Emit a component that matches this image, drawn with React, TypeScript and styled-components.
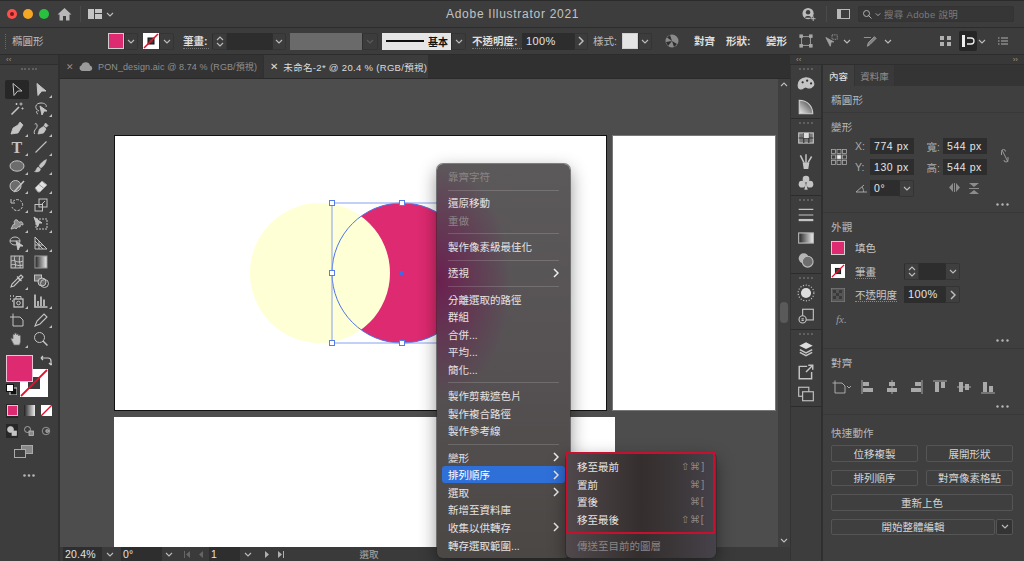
import React from "react";
import styled, { createGlobalStyle } from "styled-components";

const CJK = `"Liberation Sans", "Noto Sans CJK TC", sans-serif`;
const PINK = "#dd2a70";

const GlobalStyle = createGlobalStyle`
  html, body {
    margin: 0;
    padding: 0;
    background: #3a3a3a;
    overflow: hidden;
  }
  * { box-sizing: border-box; }
`;

const Window = styled.div`
  position: relative;
  width: 1024px;
  height: 561px;
  display: flex;
  flex-direction: column;
  overflow: hidden;
  font-family: ${CJK};
  color: #d6d6d6;
  font-size: 10.5px;
  background: #3a3a3a;
`;

/* ---------- title bar ---------- */
const TitleBar = styled.div`
  position: relative;
  height: 28px;
  flex: none;
  display: flex;
  align-items: center;
  background: #3d3d3d;
  border-top: 1px solid #2b2b2b;
  border-bottom: 1px solid #2c2c2c;
`;

const Light = styled.div<{ $color: string; $ml: number }>`
  width: 10px;
  height: 10px;
  border-radius: 50%;
  margin-left: ${(p) => p.$ml}px;
  background: ${(p) => p.$color};
  display: flex;
  align-items: center;
  justify-content: center;
`;

const LightDot = styled.div`
  width: 4px;
  height: 4px;
  border-radius: 50%;
  background: #7a1a1a;
`;

const Title = styled.div`
  position: absolute;
  left: 446px;
  top: 6px;
  font-size: 12px;
  letter-spacing: 0.72px;
  color: #c2c2c2;
  white-space: nowrap;
`;

const VRule = styled.div<{ $ml: number }>`
  width: 1px;
  height: 16px;
  margin-left: ${(p) => p.$ml}px;
  background: #4a4a4a;
`;

const Slot = styled.div<{ $ml?: number; $w: number; $h?: number }>`
  flex: none;
  margin-left: ${(p) => p.$ml ?? 0}px;
  width: ${(p) => p.$w}px;
  height: ${(p) => p.$h ?? 17}px;
  display: flex;
  align-items: center;
  justify-content: center;
  white-space: nowrap;
  color: #cfcfcf;
`;

const SearchBox = styled.div`
  flex: none;
  margin-left: 8px;
  width: 156px;
  height: 16px;
  display: flex;
  align-items: center;
  gap: 3px;
  padding-left: 4px;
  background: #363636;
  border: 1px solid #333;
  border-radius: 2px;
  color: #7b7b7b;
  font-size: 9.5px;
  letter-spacing: 0.3px;
`;

/* ---------- control bar ---------- */
const ControlBar = styled.div`
  height: 27px;
  flex: none;
  display: flex;
  align-items: center;
  background: #3c3c3c;
  border-bottom: 1px solid #2c2c2c;
`;

const Grip = styled.div`
  margin-left: 5px;
  width: 2px;
  height: 15px;
  flex: none;
  border-left: 1px dotted #6a6a6a;
`;

const CtlLabel = styled.div<{ $ml?: number; $w: number; $bright?: boolean; $dotted?: boolean }>`
  flex: none;
  margin-left: ${(p) => p.$ml ?? 0}px;
  width: ${(p) => p.$w}px;
  font-size: 10.5px;
  line-height: 14px;
  white-space: nowrap;
  color: ${(p) => (p.$bright ? "#dedede" : "#bdbdbd")};
  font-weight: ${(p) => (p.$bright ? 700 : 400)};
  border-bottom: ${(p) => (p.$dotted ? "1px dotted #777" : "none")};
`;

const ChevBox = styled.div<{ $w: number }>`
  flex: none;
  width: ${(p) => p.$w}px;
  height: 17px;
  display: flex;
  align-items: center;
  justify-content: center;
  border: 1px solid #343434;
  border-left: 1px solid #2e2e2e;
  border-radius: 0 2px 2px 0;
`;

const SpinBox = styled(ChevBox)<{ $ml?: number }>`
  flex-direction: column;
  gap: 1px;
  margin-left: ${(p) => p.$ml ?? 0}px;
  border-radius: 2px 0 0 2px;
`;

const DarkField = styled.div<{ $ml?: number; $w: number; $h?: number }>`
  flex: none;
  margin-left: ${(p) => p.$ml ?? 0}px;
  width: ${(p) => p.$w}px;
  height: ${(p) => p.$h ?? 17}px;
  background: #2d2d2d;
  color: #e4e4e4;
  font-size: 11px;
  letter-spacing: 0.4px;
  line-height: ${(p) => p.$h ?? 17}px;
  padding-left: 4px;
  white-space: nowrap;
  overflow: hidden;
`;

const GrayField = styled.div`
  flex: none;
  margin-left: 4px;
  width: 72px;
  height: 17px;
  background: #6a6a6a;
`;

const StrokePreset = styled.div`
  flex: none;
  margin-left: 4px;
  width: 69px;
  height: 17px;
  background: #e6e6e6;
  color: #111;
  font-weight: 700;
  font-size: 10px;
  display: flex;
  align-items: center;
  gap: 4px;
  padding-left: 4px;
`;

const StrokeLine = styled.div`
  width: 38px;
  height: 1.5px;
  background: #111;
`;

const Swatch = styled.div<{ $ml?: number; $color: string; $size?: number }>`
  flex: none;
  margin-left: ${(p) => p.$ml ?? 0}px;
  width: ${(p) => p.$size ?? 16}px;
  height: ${(p) => p.$size ?? 16}px;
  background: ${(p) => p.$color};
  border: 1px solid #cfcfcf;
`;

const ActiveIcon = styled(Slot)`
  background: #262626;
  border-radius: 2px;
  height: 20px;
`;

/* ---------- work area ---------- */
const Work = styled.div`
  flex: 1;
  min-height: 0;
  display: flex;
`;

const LeftBar = styled.div`
  width: 60px;
  flex: none;
  display: flex;
  flex-direction: column;
  background: #3d3d3d;
  border-right: 2px solid #303030;
`;

const StripTop = styled.div`
  height: 10px;
  flex: none;
  font-size: 8px;
  line-height: 9px;
  color: #9a9a9a;
  padding: 0 6px;
  display: flex;
  justify-content: space-between;
  background: #383838;
  border-bottom: 1px solid #2e2e2e;
`;

const GripH = styled.div<{ $w?: number }>`
  width: ${(p) => p.$w ?? 16}px;
  height: 3px;
  margin: 3px auto 0;
  flex: none;
  border-top: 2px dotted #606060;
`;

const ToolGrid = styled.div`
  margin-top: 9px;
  padding-left: 5px;
  display: grid;
  grid-template-columns: 24px 24px;
  grid-auto-rows: 19.2px;
`;

const ToolCell = styled.div<{ $active?: boolean }>`
  position: relative;
  display: flex;
  align-items: center;
  justify-content: center;
  background: ${(p) => (p.$active ? "#272727" : "transparent")};
  border-radius: 2px;
  svg { display: block; }
`;

const Corner = styled.div`
  position: absolute;
  right: 1px;
  bottom: 1px;
  width: 0;
  height: 0;
  border-left: 3px solid transparent;
  border-bottom: 3px solid #bdbdbd;
`;

const ColorBlock = styled.div`
  position: relative;
  margin: 6px 0 0 6px;
  width: 48px;
  height: 42px;
  flex: none;
`;

const BigFill = styled.div`
  position: absolute;
  left: 0;
  top: 0;
  width: 27px;
  height: 27px;
  background: ${PINK};
  border: 1px solid #e8c4d4;
  z-index: 1;
`;

const BigStroke = styled.svg`
  position: absolute;
  left: 14px;
  top: 14px;
`;

const SwapIcon = styled.svg`
  position: absolute;
  left: 34px;
  top: 0;
`;

const DefaultIcon = styled.svg`
  position: absolute;
  left: 0;
  top: 29px;
  z-index: 2;
`;

const ModeRow = styled.div<{ $mt: number; $pl?: number }>`
  margin: ${(p) => p.$mt}px 0 0 6px;
  padding-left: ${(p) => p.$pl ?? 0}px;
  width: 46px;
  display: flex;
  gap: 5px;
  flex: none;
`;

const ModeBtn = styled.div<{ $on?: boolean }>`
  width: 12px;
  height: 14px;
  display: flex;
  align-items: center;
  justify-content: center;
  background: ${(p) => (p.$on ? "#272727" : "transparent")};
`;

const CenterCol = styled.div`
  flex: 1;
  min-width: 0;
  display: flex;
  flex-direction: column;
`;

const TabBar = styled.div`
  height: 24px;
  flex: none;
  display: flex;
  background: #303030;
  border-bottom: 1px solid #2a2a2a;
`;

const DocTab = styled.div<{ $active?: boolean; $w: number }>`
  width: ${(p) => p.$w}px;
  flex: none;
  display: flex;
  align-items: center;
  gap: 5px;
  padding-left: 6px;
  margin-right: 1px;
  font-size: ${(p) => (p.$active ? 9.5 : 9)}px;
  letter-spacing: ${(p) => (p.$active ? 0.32 : 0.1)}px;
  white-space: nowrap;
  background: ${(p) => (p.$active ? "#3c3c3c" : "#333")};
  color: ${(p) => (p.$active ? "#dcdcdc" : "#8f8f8f")};
  svg { flex: none; }
`;

const CanvasRow = styled.div`
  flex: 1;
  min-height: 0;
  display: flex;
`;

const Canvas = styled.div`
  position: relative;
  flex: 1;
  overflow: hidden;
  background: #4d4d4d;
`;

const Artboard = styled.div<{ $x: number; $y: number; $w: number; $h: number; $line?: string }>`
  position: absolute;
  left: ${(p) => p.$x}px;
  top: ${(p) => p.$y}px;
  width: ${(p) => p.$w}px;
  height: ${(p) => p.$h}px;
  background: #fff;
  border: ${(p) => (p.$line ? `1.5px solid ${p.$line}` : "none")};
`;

const Artwork = styled.svg`
  position: absolute;
  left: 186px;
  top: 120px;
`;

const VScroll = styled.div`
  width: 12px;
  flex: none;
  display: flex;
  flex-direction: column;
  align-items: center;
  justify-content: space-between;
  padding: 3px 0 4px;
  background: #3f3f3f;
`;

const ScrollThumb = styled.div`
  width: 8px;
  height: 21px;
  border-radius: 4px;
  background: #5a5a5a;
`;

const StatusBar = styled.div`
  height: 14px;
  flex: none;
  display: flex;
  align-items: center;
  background: #3a3a3a;
  color: #a8a8a8;
  font-size: 9.5px;
`;

const StatusField = styled.div<{ $ml: number; $w: number }>`
  flex: none;
  margin-left: ${(p) => p.$ml}px;
  width: ${(p) => p.$w}px;
  height: 14px;
  padding-left: 2px;
  background: #2e2e2e;
  color: #e2e2e2;
  font-size: 10.5px;
  line-height: 14px;
  letter-spacing: 0.2px;
`;

const StatusChev = styled.div<{ $w: number }>`
  flex: none;
  width: ${(p) => p.$w}px;
  display: flex;
  justify-content: center;
`;

const NavGlyphs = styled.div<{ $ml: number; $w: number }>`
  flex: none;
  margin-left: ${(p) => p.$ml}px;
  width: ${(p) => p.$w}px;
  display: flex;
  justify-content: center;
`;

const StatusText = styled.div`
  flex: none;
  width: 166px;
  text-align: center;
`;

/* ---------- right side ---------- */
const RightSide = styled.div`
  width: 234px;
  flex: none;
  display: flex;
  flex-direction: column;
`;

const RightBody = styled.div`
  flex: 1;
  min-height: 0;
  display: flex;
`;

const Dock = styled.div`
  width: 33px;
  flex: none;
  display: flex;
  flex-direction: column;
  background: #3d3d3d;
  border-left: 1px solid #333;
  border-right: 2px solid #2f2f2f;
`;

const DockGroup = styled.div<{ $h: number }>`
  height: ${(p) => p.$h}px;
  flex: none;
  display: flex;
  flex-direction: column;
  align-items: center;
  border-bottom: 1px solid #2c2c2c;
`;

const DockIcons = styled.div`
  margin-top: 4px;
  display: flex;
  flex-direction: column;
  align-items: center;
  gap: 4.5px;
  svg { display: block; }
`;

const Panel = styled.div`
  flex: 1;
  min-width: 0;
  display: flex;
  flex-direction: column;
  background: #3f3f3f;
`;

const PanelTabs = styled.div`
  height: 21px;
  flex: none;
  display: flex;
  background: #343434;
`;

const PanelTab = styled.div<{ $active?: boolean; $w: number }>`
  width: ${(p) => p.$w}px;
  display: flex;
  align-items: center;
  justify-content: center;
  font-size: 9.5px;
  background: ${(p) => (p.$active ? "#3f3f3f" : "#393939")};
  color: ${(p) => (p.$active ? "#e6e6e6" : "#8d8d8d")};
  border-right: 1px solid #333;
`;

const Section = styled.div<{ $h?: number }>`
  position: relative;
  height: ${(p) => (p.$h ? `${p.$h}px` : "auto")};
  flex: ${(p) => (p.$h ? "none" : "1")};
  padding: 7px 12px 0 8px;
  border-bottom: ${(p) => (p.$h ? "1px solid #383838" : "none")};
`;

const SectionTitle = styled.div<{ $mt?: number }>`
  height: 14px;
  margin-top: ${(p) => p.$mt ?? 0}px;
  line-height: 14px;
  font-size: 10.5px;
  color: #b9b9b9;
  letter-spacing: 0.2px;
`;

const TransformRow = styled.div`
  margin-top: 4px;
  display: flex;
`;

const RefPoint = styled.svg`
  margin: 11px 8px 0 0;
  flex: none;
`;

const TransformGrid = styled.div`
  display: grid;
  grid-template-columns: 15px 44px 29px 44px;
  grid-auto-rows: 16px;
  row-gap: 5px;
  align-items: center;
`;

const AxisLabel = styled.div`
  font-size: 10.5px;
  color: #aaa;
  white-space: nowrap;
`;

const AxisRight = styled(AxisLabel)`
  text-align: right;
  padding-right: 3px;
`;

const NumField = styled.div`
  height: 16px;
  line-height: 16px;
  background: #2d2d2d;
  color: #e4e4e4;
  font-size: 10.5px;
  letter-spacing: 0.55px;
  padding-left: 4px;
  white-space: nowrap;
  overflow: hidden;
`;

const AngleField = styled(NumField)`
  width: 29px;
  margin-left: 2px;
  flex: none;
`;

const AngleCell = styled.div`
  grid-column: 1 / 3;
  display: flex;
  align-items: center;
  svg { flex: none; }
`;

const FlipCell = styled.div`
  grid-column: 3 / 5;
  display: flex;
  gap: 9px;
  padding-left: 35px;
`;

const LinkIcon = styled.svg`
  margin: 11px 0 0 13px;
  flex: none;
`;

const More = styled.svg<{ $top: number }>`
  position: absolute;
  right: 15px;
  top: ${(p) => p.$top}px;
`;

const AppearRow = styled.div<{ $mt: number }>`
  margin-top: ${(p) => p.$mt}px;
  height: 17px;
  display: flex;
  align-items: center;
`;

const AppearLabel = styled.div<{ $w: number; $dotted?: boolean }>`
  flex: none;
  width: ${(p) => p.$w}px;
  margin-left: 10px;
  color: #c6c6c6;
  span {
    border-bottom: ${(p) => (p.$dotted ? "1px dotted #888" : "none")};
  }
`;

const FxMark = styled.div`
  margin: 10px 0 0 5px;
  font-family: "Liberation Serif", serif;
  font-style: italic;
  font-size: 11px;
  color: #9a9a9a;
`;

const AlignRow = styled.div`
  margin-top: 9px;
  display: flex;
  align-items: center;
  gap: 8px;
  padding-left: 1px;
`;

const QuickGrid = styled.div`
  margin-top: 5px;
  display: grid;
  grid-template-columns: 87px 87px;
  column-gap: 8px;
  row-gap: 8px;
  grid-auto-rows: 16.5px;
`;

const QuickBtn = styled.div<{ $span?: number }>`
  grid-column: span ${(p) => p.$span ?? 1};
  display: flex;
  align-items: center;
  justify-content: center;
  border: 1px solid #555;
  border-radius: 2px;
  color: #d4d4d4;
  font-size: 10.5px;
`;

const SplitRow = styled.div`
  grid-column: span 2;
  display: flex;
  gap: 1px;
`;

const SplitMain = styled(QuickBtn)`
  flex: 1;
`;

const SplitSide = styled(QuickBtn)`
  width: 17px;
  flex: none;
  background: #343434;
`;

/* ---------- context menu ---------- */
const Menu = styled.div`
  position: absolute;
  left: 437px;
  top: 164px;
  width: 133px;
  height: 394px;
  padding: 4px 5px;
  border-radius: 6px;
  color: #e8e6e6;
  background:
    radial-gradient(ellipse 75px 120px at 0 118px, rgba(112, 18, 78, 0.8), transparent),
    linear-gradient(180deg, #5c595b 0%, #565254 50%, #4b4744 100%);
  box-shadow: 0 0 0 1px rgba(40, 40, 40, 0.55), 0 6px 18px rgba(0, 0, 0, 0.45);
`;

const SubMenu = styled(Menu)`
  left: 566px;
  top: 453px;
  width: 150px;
  height: 105px;
  padding: 5px 5px;
  background: linear-gradient(90deg, #50484a 0%, #352e2f 50%, #3a3536 70%, #46424a 100%);
`;

const MenuRow = styled.div<{ $on?: boolean; $off?: boolean }>`
  height: 17.6px;
  display: flex;
  align-items: center;
  justify-content: space-between;
  padding: 0 6px;
  font-size: 10.5px;
  white-space: nowrap;
  border-radius: 3px;
  color: ${(p) => (p.$on ? "#fff" : p.$off ? "#8a8687" : "#e6e3e3")};
  background: ${(p) => (p.$on ? "#2f6fd8" : "transparent")};
`;

const MenuSep = styled.div`
  height: 1px;
  margin: 4px 6px 3.6px;
  background: rgba(255, 255, 255, 0.16);
`;

const Keys = styled.span`
  color: #8b8888;
  font-size: 10px;
  font-family: "DejaVu Sans", sans-serif;
  letter-spacing: 0.6px;
`;

const RedBox = styled.div`
  position: absolute;
  left: 566px;
  top: 452px;
  width: 149px;
  height: 82px;
  border: 2px solid #c8102e;
  pointer-events: none;
`;

/* ---------- small drawings ---------- */
const Chev = ({ c = "#bdbdbd", w = 8 }: { c?: string; w?: number }) => (
  <svg width={w} height={5} viewBox="0 0 8 5">
    <path d="M1 1l3 3 3-3" fill="none" stroke={c} strokeWidth="1.1" />
  </svg>
);

const ChevUp = () => (
  <svg width={8} height={5} viewBox="0 0 8 5">
    <path d="M1 4l3-3 3 3" fill="none" stroke="#bdbdbd" strokeWidth="1.1" />
  </svg>
);

const ChevR = ({ c = "#d6d6d6" }: { c?: string }) => (
  <svg width={6} height={10} viewBox="0 0 6 10">
    <path d="M1 1l4 4-4 4" fill="none" stroke={c} strokeWidth="1.5" />
  </svg>
);

const StrokeMini = ({ s = 16 }: { s?: number }) => (
  <svg width={s} height={s} viewBox="0 0 16 16">
    <rect width="16" height="16" fill="#fff" />
    <rect x="5" y="5" width="6" height="6" fill="#3a3a3a" stroke="#111" />
    <path d="M1 15L15 1" stroke="#e8112d" strokeWidth="1.6" />
  </svg>
);

const Dots = ({ top }: { top: number }) => (
  <More $top={top} width={13} height={3} viewBox="0 0 13 3">
    <circle cx="1.5" cy="1.5" r="1.2" fill="#b5b5b5" />
    <circle cx="6.5" cy="1.5" r="1.2" fill="#b5b5b5" />
    <circle cx="11.5" cy="1.5" r="1.2" fill="#b5b5b5" />
  </More>
);

const I = ({ children, s = 16, c = "#c4c4c4" }: { children: React.ReactNode; s?: number; c?: string }) => (
  <svg width={s} height={s} viewBox="0 0 16 16" fill="none" stroke={c} strokeWidth="1">
    {children}
  </svg>
);

const F = "#c4c4c4";

const tools: { key: string; corner?: boolean; active?: boolean; icon: React.ReactNode }[] = [
  { key: "select", active: true, icon: <path d="M4 1.5l9 7.5H8.7L5 13.5z" /> },
  { key: "direct", corner: true, icon: <path d="M4 1.5l9 7.5H8.7L5 13.5z" fill={F} /> },
  { key: "wand", icon: <><path d="M2.5 13.5L10 6" strokeWidth="1.6" /><path d="M12 1.5v3M10.5 3h3M13.5 6.5v2M12.5 7.5h2M7.5 2v2M6.5 3h2" /></> },
  { key: "lasso", corner: true, icon: <><path d="M6 10C1 8 2 2 8 2c4 0 6 2 5 4M4 10c-1 1 0 3 1 3" /><path d="M7 5l7 5h-3l-2 4z" fill={F} /></> },
  { key: "pen", corner: true, icon: <path d="M2 14l2-6 5-3 3 3-3 5zM9 5l2-3 3 3-2 3M2 14l4-4" fill={F} strokeWidth="0.8" /> },
  { key: "curve", corner: true, icon: <><path d="M1.5 14C0 9 5 9 4 5c-.4-2-2-2-2-.5" /><path d="M5 14l1.5-5 4-2.5 2.5 2.5-2.5 4zM11 6l1.5-3 2.5 2.5-2 2" fill={F} strokeWidth="0.8" /></> },
  { key: "type", corner: true, icon: <text x="2.5" y="13.5" fontFamily="Liberation Serif, serif" fontSize="16" fontWeight="700" fill={F} stroke="none">T</text> },
  { key: "line", corner: true, icon: <path d="M2.5 13.5l11-11" strokeWidth="1.1" /> },
  { key: "ellipse", corner: true, icon: <ellipse cx="8" cy="8" rx="7" ry="5.2" fill="#6c6c6c" stroke={F} /> },
  { key: "brush", corner: true, icon: <path d="M13.5 1.5c-3 1-6 4-7.5 6.5l2 2c2.5-1.5 5-5 5.5-8.5zM5.5 9C3 9.500 4 12.500 1.500 13.500c3 1 6 0 6-2.500z" fill={F} strokeWidth="0.5" /> },
  { key: "shaper", corner: true, icon: <><circle cx="6.5" cy="8" r="5.500" fill="#6c6c6c" stroke={F} /><path d="M5 14L15 3" strokeWidth="1.6" /></> },
  { key: "eraser", corner: true, icon: <path d="M2 10l7-7 5 4-7 7H5zM6 6.5l5 4" fill="#e0e0e0" stroke="#999" /> },
  { key: "rotate", corner: true, icon: <><path d="M4 4.5A5.5 5.5 0 1 1 3 10" strokeDasharray="2.5 1.2" /><path d="M2 2v4h4" /></> },
  { key: "scale", corner: true, icon: <><rect x="2" y="7.5" width="7.5" height="6.5" /><rect x="6" y="2" width="8" height="8" /><path d="M8 8l4-4" /></> },
  { key: "warp", corner: true, icon: <path d="M2 13c2-3 1-5 4-5-2-2 0-5 2-4s1 3 3 2 3 1 3 3c-2-1-3 0-3 2-2-1-3 1-4 2-1-2-3 0-5 0z" fill="#8a8a8a" /> },
  { key: "free", corner: true, icon: <><rect x="3" y="3" width="11" height="10" strokeDasharray="2 1" /><path d="M1 1l8 6H6L4.5 11z" fill={F} /></> },
  { key: "builder", corner: true, icon: <><ellipse cx="6" cy="6" rx="5" ry="4" /><path d="M1 6h10" /><path d="M7 6l7 5h-3l-2 4z" fill={F} /></> },
  { key: "perspective", corner: true, icon: <><path d="M2 2v12h12L2 2z" /><path d="M2 6l8 8M2 10h8M6 6v8" /></> },
  { key: "mesh", icon: <><rect x="2" y="2" width="12" height="12" fill="#555" /><path d="M2 7c4-2 6 3 12 0M2 11c4-2 6 2 12 0M6 2c-2 4 2 7 0 12M11 2c-2 4 1 8 0 12" /></> },
  { key: "gradient", icon: <><defs><linearGradient id="tg"><stop offset="0" stopColor="#222" /><stop offset="1" stopColor="#eee" /></linearGradient></defs><rect x="2" y="2" width="12" height="12" fill="url(#tg)" stroke="#999" /></> },
  { key: "dropper", corner: true, icon: <path d="M2 14l1-3 6-6 2 2-6 6zM9 5l3-3 2 2-3 3M8 3.5l4.5 4.5" strokeWidth="1.1" /> },
  { key: "blend", icon: <><rect x="1.5" y="2" width="7" height="6" fill="#777" /><circle cx="9" cy="9" r="4" fill="#666" /><circle cx="11.5" cy="10.5" r="4" /></> },
  { key: "spray", corner: true, icon: <><rect x="5" y="6" width="9" height="8" strokeWidth="1.3" /><circle cx="9.5" cy="10" r="1.8" /><path d="M7 6V3.5h5V6" /><path d="M1 3h1M4 3h1M1 6h1M3 8h1" strokeWidth="1.3" /></> },
  { key: "chart", corner: true, icon: <path d="M2 1.5V14h12.5M5 13V8M8 13V3.5M11 13V6.5" strokeWidth="1.7" /> },
  { key: "artboard", icon: <><path d="M4 5h7l3 3v6H4z" /><path d="M1 5h3V1.5" /></> },
  { key: "slice", corner: true, icon: <path d="M2 14l2-5 7-7 3 3-7 7z" strokeWidth="1.1" /> },
  { key: "hand", corner: true, icon: <path d="M5 14L2 8c0-1 1-1 2 0V4c0-1 1.5-1 1.5 0V3c0-1 2-1 2 0v1c0-1 2-1 2 0v1c0-1 2-1 2 0v5c0 2-1 3-1 4z" fill={F} stroke="#666" strokeWidth="0.7" /> },
  { key: "zoom", icon: <><circle cx="6.5" cy="6.5" r="5" /><path d="M10 10l4.500 4.500" strokeWidth="1.5" /></> },
];

const dockGroups: { id: string; h: number; icons: React.ReactNode[] }[] = [
  {
    id: "colour",
    h: 54,
    icons: [
      <I key="p" s={18}><path d="M8 2.5C3.5 2.5 1 6 1 9s2 4 4 3 2-2 4-1 6 0 6-3-3-5.5-7-5.5z" fill={F} /><circle cx="5" cy="6.5" r="1" fill="#333" stroke="none" /><circle cx="9" cy="5" r="1" fill="#333" stroke="none" /><circle cx="12.5" cy="7.5" r="1" fill="#333" stroke="none" /></I>,
      <I key="g" s={18}><defs><linearGradient id="dg" x1="0" y1="1" x2="1" y2="0"><stop offset="0" stopColor="#eee" /><stop offset="1" stopColor="#333" /></linearGradient></defs><path d="M2 2c7 0 12 5 12 12H2z" fill="url(#dg)" stroke="#ccc" /></I>,
    ],
  },
  {
    id: "swatches",
    h: 77,
    icons: [
      <I key="s" s={18}><rect x="1.5" y="3.5" width="13" height="9" fill="#777" /><path d="M1.5 8h13M6 3.5v9M10.5 3.5v9" stroke="#333" /><rect x="6" y="3.5" width="4.5" height="4.5" fill="#ddd" stroke="none" /></I>,
      <I key="b" s={18}><path d="M5 9h6l-1 6H6z" fill={F} stroke="none" /><path d="M6 9L3 3M8 9V2M10 9l3-5" strokeWidth="1.3" /></I>,
      <I key="c" s={18}><circle cx="8" cy="4.5" r="3" fill={F} stroke="none" /><circle cx="4.5" cy="9" r="3" fill={F} stroke="none" /><circle cx="11.5" cy="9" r="3" fill={F} stroke="none" /><path d="M8 7l1.5 7h-3z" fill={F} stroke="none" /></I>,
    ],
  },
  {
    id: "stroke",
    h: 78,
    icons: [
      <I key="l" s={18}><path d="M1.5 3h13M1.5 8h13" strokeWidth="1" /><path d="M1.5 12.5h13" strokeWidth="2" /></I>,
      <I key="g" s={18}><defs><linearGradient id="dh"><stop offset="0" stopColor="#222" /><stop offset="1" stopColor="#eee" /></linearGradient></defs><rect x="1.5" y="3.5" width="13" height="9" fill="url(#dh)" stroke="#bbb" /></I>,
      <I key="t" s={18}><circle cx="6" cy="6.5" r="4.5" fill="#b5b5b5" stroke="none" /><circle cx="9.5" cy="9.5" r="4.8" fill="#6e6e6e" stroke="#bbb" /></I>,
    ],
  },
  {
    id: "appearance",
    h: 56,
    icons: [
      <I key="u" s={18}><circle cx="8" cy="8" r="4.5" fill="#ddd" stroke="none" /><circle cx="8" cy="8" r="7" strokeDasharray="1 1.5" /></I>,
      <I key="i" s={18}><rect x="5" y="2" width="9.5" height="9.5" /><circle cx="5" cy="11" r="3.2" fill="#3d3d3d" /><path d="M4 10.5h2M4 12h2" /></I>,
    ],
  },
  {
    id: "layers",
    h: 77,
    icons: [
      <I key="l" s={18}><path d="M8 2l6 3-6 3-6-3z" fill="#ddd" stroke="none" /><path d="M2.5 8.5L8 11.5l5.500-3M2.500 11l5.500 3 5.500-3" strokeWidth="1.3" /></I>,
      <I key="e" s={18}><path d="M9 3H2v11h11V8M8 8l6-6M10 2h4v4" strokeWidth="1.3" /></I>,
      <I key="a" s={18}><rect x="1.5" y="2" width="9" height="8" /><rect x="5" y="6" width="9.5" height="8" fill="#3d3d3d" /></I>,
    ],
  },
];

const B = "#a9a9a9";
const alignIcons = [
  <><path d="M2 1v14" /><rect x="3" y="3" width="6" height="4" fill={B} stroke="none" /><rect x="3" y="9" width="10" height="4" fill={B} stroke="none" /></>,
  <><path d="M8 1v14" /><rect x="5" y="3" width="6" height="4" fill={B} stroke="none" /><rect x="3" y="9" width="10" height="4" fill={B} stroke="none" /></>,
  <><path d="M14 1v14" /><rect x="7" y="3" width="6" height="4" fill={B} stroke="none" /><rect x="3" y="9" width="10" height="4" fill={B} stroke="none" /></>,
  <><path d="M1 2h14" /><rect x="3" y="3" width="4" height="10" fill={B} stroke="none" /><rect x="9" y="3" width="4" height="6" fill={B} stroke="none" /></>,
  <><path d="M1 8h14" /><rect x="3" y="3" width="4" height="10" fill={B} stroke="none" /><rect x="9" y="5" width="4" height="6" fill={B} stroke="none" /></>,
  <><path d="M1 14h14" /><rect x="3" y="3" width="4" height="10" fill={B} stroke="none" /><rect x="9" y="7" width="4" height="6" fill={B} stroke="none" /></>,
];

type MenuItem = { t?: string; off?: boolean; on?: boolean; sub?: boolean; sep?: boolean };

const menuItems: MenuItem[] = [
  { t: "靠齊字符", off: true },
  { sep: true },
  { t: "還原移動" },
  { t: "重做", off: true },
  { sep: true },
  { t: "製作像素級最佳化" },
  { sep: true },
  { t: "透視", sub: true },
  { sep: true },
  { t: "分離選取的路徑" },
  { t: "群組" },
  { t: "合併..." },
  { t: "平均..." },
  { t: "簡化..." },
  { sep: true },
  { t: "製作剪裁遮色片" },
  { t: "製作複合路徑" },
  { t: "製作參考線" },
  { sep: true },
  { t: "變形", sub: true },
  { t: "排列順序", sub: true, on: true },
  { t: "選取", sub: true },
  { t: "新增至資料庫" },
  { t: "收集以供轉存", sub: true },
  { t: "轉存選取範圍..." },
];

const handles = [
  [332, 203],
  [402, 203],
  [332, 273],
  [332, 343],
  [402, 343],
];

export default function App() {
  return (
    <Window>
      <GlobalStyle />
      <TitleBar>
        <Light $color="#ff4f4a" $ml={7}>
          <LightDot />
        </Light>
        <Light $color="#f5a623" $ml={6} />
        <Light $color="#27c13f" $ml={6} />
        <Slot $ml={7} $w={16}>
          <svg width={15} height={14} viewBox="0 0 15 14">
            <path d="M7.5 1L.5 7.5h2v6H6V9h3v4.500h3.500v-6h2z" fill="#b8b8b8" />
          </svg>
        </Slot>
        <VRule $ml={8} />
        <Slot $ml={7} $w={14}>
          <svg width={14} height={10} viewBox="0 0 14 10">
            <rect width="6" height="10" fill="#c4c4c4" />
            <rect x="7" width="7" height="4" fill="#c4c4c4" />
            <rect x="7" y="5" width="7" height="5" fill="#c4c4c4" />
          </svg>
        </Slot>
        <Slot $ml={3} $w={9}>
          <Chev />
        </Slot>
        <Title>Adobe Illustrator 2021</Title>
        <Slot $ml={688} $w={14}>
          <svg width={15} height={15} viewBox="0 0 15 15">
            <circle cx="6.5" cy="6.5" r="6" fill="#bcbcbc" />
            <circle cx="6.5" cy="5.2" r="2.4" fill="#3d3d3d" />
            <path d="M2.8 11c1-2.5 6.4-2.5 7.4 0" fill="#3d3d3d" />
            <path d="M12 9.5v5M9.5 12h5" stroke="#bcbcbc" />
          </svg>
        </Slot>
        <VRule $ml={10} />
        <Slot $ml={9} $w={14}>
          <svg width={13} height={10} viewBox="0 0 13 10" fill="none" stroke="#b8b8b8">
            <rect x="0.5" y="0.5" width="12" height="9" />
            <rect x="1" y="1" width="3" height="8" fill="#b8b8b8" stroke="none" />
          </svg>
        </Slot>
        <SearchBox>
          <svg width={9} height={9} viewBox="0 0 9 9" fill="none" stroke="#b0b0b0">
            <circle cx="3.5" cy="3.5" r="3" />
            <path d="M5.5 5.5l3 3" />
          </svg>
          <Chev w={6} />
          <span>搜尋 Adobe 說明</span>
        </SearchBox>
      </TitleBar>

      <ControlBar>
        <Grip />
        <CtlLabel $ml={5} $w={31}>橢圓形</CtlLabel>
        <Swatch $ml={65} $color={PINK} />
        <ChevBox $w={14}><Chev /></ChevBox>
        <Slot $ml={5} $w={16} $h={16}><StrokeMini /></Slot>
        <ChevBox $w={15}><Chev /></ChevBox>
        <CtlLabel $ml={9} $w={26} $bright $dotted>筆畫:</CtlLabel>
        <SpinBox $w={15} $ml={3}><ChevUp /><Chev /></SpinBox>
        <DarkField $w={45} />
        <ChevBox $w={14}><Chev /></ChevBox>
        <GrayField />
        <ChevBox $w={16}><Chev c="#5c5c5c" /></ChevBox>
        <StrokePreset><StrokeLine />基本</StrokePreset>
        <ChevBox $w={15}><Chev /></ChevBox>
        <CtlLabel $ml={6} $w={50} $bright $dotted>不透明度:</CtlLabel>
        <DarkField $w={52}>100%</DarkField>
        <ChevBox $w={14}><ChevR c="#bdbdbd" /></ChevBox>
        <CtlLabel $ml={5} $w={25}>樣式:</CtlLabel>
        <Swatch $ml={4} $color="#e4e4e4" />
        <ChevBox $w={14}><Chev /></ChevBox>
        <Slot $ml={12} $w={16}>
          <svg width={14} height={14} viewBox="0 0 14 14">
            <circle cx="7" cy="7" r="6.5" fill="#8a8a8a" />
            <path d="M7 7L2 3.5 5 1zM7 7l5 3-3 3zM7 7l-6 1 2 4z" fill="#2e2e2e" />
          </svg>
        </Slot>
        <CtlLabel $ml={14} $w={22} $bright>對齊</CtlLabel>
        <CtlLabel $ml={10} $w={26} $bright>形狀:</CtlLabel>
        <CtlLabel $ml={14} $w={22} $bright>變形</CtlLabel>
        <Slot $ml={11} $w={14}>
          <I s={14} c="#a5a5a5"><rect x="3" y="3" width="10" height="10" /><rect x="1" y="1" width="3" height="3" fill="#a5a5a5" /><rect x="12" y="1" width="3" height="3" fill="#a5a5a5" /><rect x="1" y="12" width="3" height="3" fill="#a5a5a5" /><rect x="12" y="12" width="3" height="3" fill="#a5a5a5" /></I>
        </Slot>
        <Slot $ml={12} $w={14}>
          <I s={14} c="#a0a0a0"><rect x="8" y="1" width="6" height="5" strokeDasharray="1.5 1" /><path d="M1 4l9 5H7l-1 5z" fill="#a0a0a0" /></I>
        </Slot>
        <Slot $ml={3} $w={10}><Chev /></Slot>
        <Slot $ml={11} $w={14}>
          <I s={14} c="#a0a0a0"><path d="M1 4h8M5 14l1-4 7-7 2 2-7 7z" fill="#808080" /></I>
        </Slot>
        <Slot $ml={6} $w={10}><Chev /></Slot>
        <Slot $ml={45} $w={14}>
          <svg width={11} height={10} viewBox="0 0 11 10" fill="#b0b0b0">
            <rect width="4" height="4" /><rect x="7" width="4" height="4" /><rect y="6" width="4" height="4" /><rect x="7" y="6" width="4" height="4" />
          </svg>
        </Slot>
        <ActiveIcon $ml={7} $w={18}>
          <svg width={13} height={12} viewBox="0 0 13 12">
            <rect width="3" height="12" fill="#eee" />
            <path d="M5 3h4a3 3 0 0 1 0 6H5" fill="none" stroke="#eee" strokeWidth="1.3" />
          </svg>
        </ActiveIcon>
        <Slot $w={10}><Chev /></Slot>
        <Slot $ml={10} $w={12}>
          <svg width={10} height={8} viewBox="0 0 10 8" stroke="#b0b0b0">
            <path d="M0 1h1.5M3 1h7M0 4h1.5M3 4h7M0 7h1.5M3 7h7" />
          </svg>
        </Slot>
      </ControlBar>

      <Work>
        <LeftBar>
          <StripTop>‹‹</StripTop>
          <GripH />
          <ToolGrid>
            {tools.map((tool) => (
              <ToolCell key={tool.key} $active={tool.active}>
                <I>{tool.icon}</I>
                {tool.corner && <Corner />}
              </ToolCell>
            ))}
          </ToolGrid>
          <ColorBlock>
            <BigFill />
            <BigStroke width={28} height={28} viewBox="0 0 28 28">
              <rect width="28" height="28" fill="#fff" />
              <rect x="8" y="8" width="12" height="12" fill="#3d3d3d" />
              <path d="M1 27L27 1" stroke="#e8112d" strokeWidth="1.8" />
            </BigStroke>
            <SwapIcon width={12} height={12} viewBox="0 0 12 12" fill="none" stroke="#ccc" strokeWidth="1.2">
              <path d="M1 3h7c2 0 3 1 3 3v4M1 3l2-2M1 3l2 2M11 10L9 8M11 10l2-2" />
            </SwapIcon>
            <DefaultIcon width={11} height={11} viewBox="0 0 11 11">
              <rect x="4" y="4" width="7" height="7" fill="#111" stroke="#ddd" />
              <rect x="0.5" y="0.5" width="7" height="7" fill="#fff" stroke="#111" />
            </DefaultIcon>
          </ColorBlock>
          <ModeRow $mt={7}>
            <ModeBtn $on><Swatch $color={PINK} $size={11} /></ModeBtn>
            <ModeBtn>
              <svg width={11} height={11} viewBox="0 0 11 11">
                <defs><linearGradient id="mg"><stop offset="0" stopColor="#222" /><stop offset="1" stopColor="#eee" /></linearGradient></defs>
                <rect width="11" height="11" fill="url(#mg)" />
              </svg>
            </ModeBtn>
            <ModeBtn>
              <svg width={11} height={11} viewBox="0 0 11 11">
                <rect width="11" height="11" fill="#fff" />
                <path d="M0 11L11 0" stroke="#e8112d" strokeWidth="1.4" />
              </svg>
            </ModeBtn>
          </ModeRow>
          <ModeRow $mt={6}>
            <ModeBtn $on>
              <I s={12}><circle cx="6" cy="6" r="4" fill={F} /><rect x="8" y="8" width="6" height="6" fill={F} /></I>
            </ModeBtn>
            <ModeBtn>
              <I s={12}><circle cx="6" cy="6" r="4" /><rect x="8" y="8" width="6" height="6" fill="#888" /></I>
            </ModeBtn>
            <ModeBtn>
              <I s={10}><circle cx="8" cy="8" r="6" /><circle cx="10" cy="8" r="2.5" fill="#888" /></I>
            </ModeBtn>
          </ModeRow>
          <ModeRow $mt={7} $pl={8}>
            <svg width={34} height={14} viewBox="0 0 34 14" fill="none" stroke="#aaa">
              <rect x="7.5" y="0.5" width="11" height="8" fill="#888" />
              <rect x="0.5" y="4.5" width="11" height="8" fill="#3d3d3d" />
            </svg>
          </ModeRow>
          <ModeRow $mt={15} $pl={17}>
            <svg width={12} height={3} viewBox="0 0 12 3" fill="#b5b5b5">
              <circle cx="1.5" cy="1.5" r="1.3" />
              <circle cx="6" cy="1.5" r="1.3" />
              <circle cx="10.5" cy="1.5" r="1.3" />
            </svg>
          </ModeRow>
        </LeftBar>

        <CenterCol>
          <TabBar>
            <DocTab $w={203}>
              <span>✕</span>
              <svg width={14} height={9} viewBox="0 0 14 9">
                <path d="M3 9a3 3 0 0 1-.5-5.8A4.500 4.500 0 0 1 11 3.500 2.800 2.800 0 0 1 11 9z" fill="#9a9a9a" />
              </svg>
              PON_design.aic @ 8.74 % (RGB/預視)
            </DocTab>
            <DocTab $w={164} $active>
              <span>✕</span>
              未命名-2* @ 20.4 % (RGB/預視)
            </DocTab>
          </TabBar>
          <CanvasRow>
            <Canvas>
              <Artboard $x={54} $y={56} $w={493} $h={276} $line="#111" />
              <Artboard $x={552} $y={56} $w={164} $h={276} $line="#777" />
              <Artboard $x={54} $y={338} $w={501} $h={130} />
              <Artwork width={232} height={148} viewBox="246 199 232 148">
                <circle cx="402" cy="273" r="70" fill={PINK} />
                <circle cx="320" cy="273" r="70" fill="#ffffd6" />
                <circle cx="402" cy="273" r="70" fill="none" stroke="#4f74e8" />
                <rect x="332" y="203" width="140" height="140" fill="none" stroke="#86a0f0" />
                {handles.map(([x, y]) => (
                  <rect key={`${x}-${y}`} x={x - 2.5} y={y - 2.5} width="5" height="5" fill="#fff" stroke="#5a7ee8" />
                ))}
                <circle cx="401.5" cy="273" r="2.2" fill="#3f6be8" />
              </Artwork>
            </Canvas>
            <VScroll>
              <ChevUp />
              <ScrollThumb />
              <Chev />
            </VScroll>
          </CanvasRow>
          <StatusBar>
            <StatusField $ml={3} $w={39}>20.4%</StatusField>
            <StatusChev $w={16}><Chev /></StatusChev>
            <StatusField $ml={3} $w={41}>0°</StatusField>
            <StatusChev $w={13}><Chev /></StatusChev>
            <NavGlyphs $ml={7} $w={24}>
              <svg width={20} height={7} viewBox="0 0 20 7" fill="#666">
                <rect y="0" width="1" height="7" /><path d="M6 0v7L2 3.5zM19 0v7l-4-3.5z" />
              </svg>
            </NavGlyphs>
            <StatusField $ml={3} $w={31}>1</StatusField>
            <StatusChev $w={15}><Chev /></StatusChev>
            <NavGlyphs $ml={7} $w={24}>
              <svg width={20} height={7} viewBox="0 0 20 7" fill="#b0b0b0">
                <path d="M1 0v7l4-3.5zM14 0v7l4-3.5z" /><rect x="19" width="1" height="7" />
              </svg>
            </NavGlyphs>
            <StatusText>選取</StatusText>
          </StatusBar>
        </CenterCol>

        <RightSide>
          <StripTop>
            <span>‹‹</span>
            <span>››</span>
          </StripTop>
          <RightBody>
            <Dock>
              {dockGroups.map((group) => (
                <DockGroup key={group.id} $h={group.h}>
                  <GripH $w={14} />
                  <DockIcons>{group.icons}</DockIcons>
                </DockGroup>
              ))}
            </Dock>
            <Panel>
              <PanelTabs>
                <PanelTab $active $w={32}>內容</PanelTab>
                <PanelTab $w={40}>資料庫</PanelTab>
              </PanelTabs>
              <Section $h={27}>
                <SectionTitle>橢圓形</SectionTitle>
              </Section>
              <Section $h={100}>
                <SectionTitle>變形</SectionTitle>
                <TransformRow>
                  <RefPoint width={16} height={16} viewBox="0 0 16 16" fill="none" stroke="#aaa" strokeWidth="0.8">
                    {[0, 1, 2].flatMap((r) =>
                      [0, 1, 2].map((c) => (
                        <rect
                          key={`${r}${c}`}
                          x={0.5 + c * 5.5}
                          y={0.5 + r * 5.5}
                          width="4"
                          height="4"
                          fill={r === 1 && c === 1 ? "#eee" : "none"}
                        />
                      ))
                    )}
                  </RefPoint>
                  <TransformGrid>
                    <AxisLabel>X:</AxisLabel>
                    <NumField>774 px</NumField>
                    <AxisRight>寬:</AxisRight>
                    <NumField>544 px</NumField>
                    <AxisLabel>Y:</AxisLabel>
                    <NumField>130 px</NumField>
                    <AxisRight>高:</AxisRight>
                    <NumField>544 px</NumField>
                    <AngleCell>
                      <svg width={13} height={9} viewBox="0 0 13 9" fill="none" stroke="#a5a5a5">
                        <path d="M1 8h11M1 8l8-7M7 3c1 1 1.5 3 1.5 5" />
                      </svg>
                      <AngleField>0°</AngleField>
                      <ChevBox $w={15}><Chev /></ChevBox>
                    </AngleCell>
                    <FlipCell>
                      <svg width={11} height={9} viewBox="0 0 11 9" fill="#8c8c8c">
                        <path d="M4 0v9L0 4.5zM7 0v9l4-4.500z" /><rect x="5" width="1" height="9" />
                      </svg>
                      <svg width={10} height={11} viewBox="0 0 10 11" fill="#8c8c8c">
                        <path d="M0 0h10L5 4zM0 11h10L5 7z" /><rect y="5" width="10" height="1" />
                      </svg>
                    </FlipCell>
                  </TransformGrid>
                  <LinkIcon width={10} height={14} viewBox="0 0 10 14" fill="none" stroke="#999">
                    <path d="M1.5 6V2.500a2 2 0 0 1 4 0M8 8v3a2 2 0 0 1-4 0M2 1l6 12" />
                  </LinkIcon>
                </TransformRow>
                <Dots top={90} />
              </Section>
              <Section $h={136}>
                <SectionTitle>外觀</SectionTitle>
                <AppearRow $mt={5}>
                  <Swatch $color={PINK} $size={14} />
                  <AppearLabel $w={49}>填色</AppearLabel>
                </AppearRow>
                <AppearRow $mt={6.5}>
                  <StrokeMini s={14} />
                  <AppearLabel $w={49} $dotted><span>筆畫</span></AppearLabel>
                  <SpinBox $w={15}><ChevUp /><Chev /></SpinBox>
                  <DarkField $w={26} />
                  <ChevBox $w={15}><Chev /></ChevBox>
                </AppearRow>
                <AppearRow $mt={6.5}>
                  <svg width={14} height={14} viewBox="0 0 14 14">
                    <rect width="14" height="14" fill="#555" stroke="#888" />
                    <path d="M2 2h3v3H2zM8 2h3v3H8zM5 5h3v3H5zM2 8h3v3H2zM8 8h3v3H8z" fill="#3a3a3a" />
                  </svg>
                  <AppearLabel $w={49} $dotted><span>不透明度</span></AppearLabel>
                  <DarkField $w={41}>100%</DarkField>
                  <ChevBox $w={15}><ChevR c="#bdbdbd" /></ChevBox>
                </AppearRow>
                <FxMark>fx.</FxMark>
                <Dots top={126} />
              </Section>
              <Section $h={66}>
                <SectionTitle>對齊</SectionTitle>
                <AlignRow>
                  <svg width={20} height={14} viewBox="0 0 20 14" fill="none" stroke="#aaa">
                    <path d="M3 3h7l3 3v7H3zM.5 3H3V.5" />
                    <path d="M15 6l2 2 2-2" />
                  </svg>
                  {alignIcons.map((icon, i) => (
                    <I key={i} c={B}>{icon}</I>
                  ))}
                </AlignRow>
                <Dots top={56} />
              </Section>
              <Section>
                <SectionTitle $mt={4}>快速動作</SectionTitle>
                <QuickGrid>
                  <QuickBtn>位移複製</QuickBtn>
                  <QuickBtn>展開形狀</QuickBtn>
                  <QuickBtn>排列順序</QuickBtn>
                  <QuickBtn>對齊像素格點</QuickBtn>
                  <QuickBtn $span={2}>重新上色</QuickBtn>
                  <SplitRow>
                    <SplitMain>開始整體編輯</SplitMain>
                    <SplitSide><Chev /></SplitSide>
                  </SplitRow>
                </QuickGrid>
              </Section>
            </Panel>
          </RightBody>
        </RightSide>
      </Work>

      <Menu>
        {menuItems.map((item, i) =>
          item.sep ? (
            <MenuSep key={i} />
          ) : (
            <MenuRow key={i} $on={item.on} $off={item.off}>
              {item.t}
              {item.sub && <ChevR c="#eee" />}
            </MenuRow>
          )
        )}
      </Menu>
      <SubMenu>
        <MenuRow>移至最前<Keys>⇧⌘]</Keys></MenuRow>
        <MenuRow>置前<Keys>⌘]</Keys></MenuRow>
        <MenuRow>置後<Keys>⌘[</Keys></MenuRow>
        <MenuRow>移至最後<Keys>⇧⌘[</Keys></MenuRow>
        <MenuSep />
        <MenuRow $off>傳送至目前的圖層</MenuRow>
      </SubMenu>
      <RedBox />
    </Window>
  );
}
